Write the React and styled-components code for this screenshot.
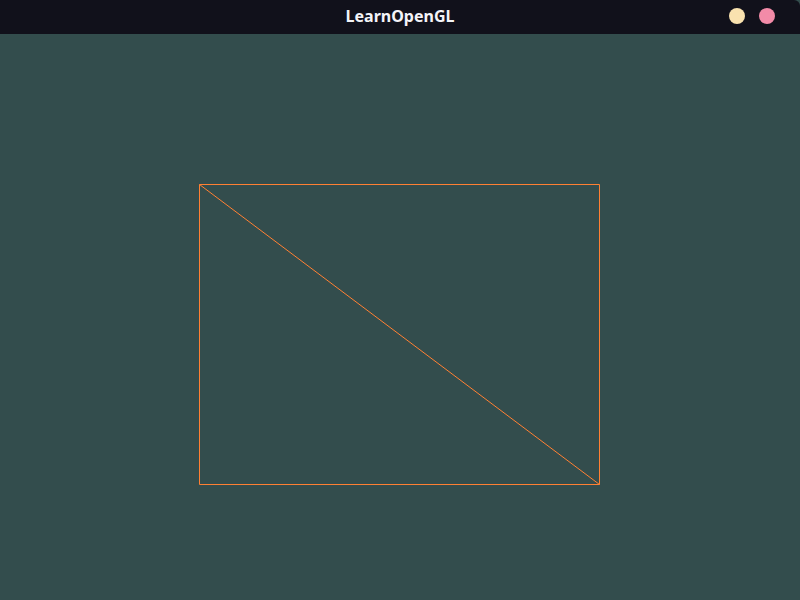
import React from "react";
import styled, { createGlobalStyle } from "styled-components";

const GlobalStyle = createGlobalStyle`
  html, body {
    margin: 0;
    padding: 0;
    width: 800px;
    height: 600px;
    overflow: hidden;
    background: #334d4d;
  }
`;

const Window = styled.div`
  width: 800px;
  height: 600px;
  display: flex;
  flex-direction: column;
  background: #334d4d;
  border-top-right-radius: 6px;
  overflow: hidden;
`;

const TitleBar = styled.div`
  height: 34px;
  flex-shrink: 0;
  background: #11111b;
  display: grid;
  grid-template-columns: 1fr auto 1fr;
  align-items: center;
  font-family: "Noto Sans", "Open Sans", sans-serif;
`;

const Title = styled.div`
  grid-column: 2;
  color: #f4f4f8;
  font-size: 16px;
  font-weight: 700;
  padding-bottom: 3px;
`;

const Controls = styled.div`
  grid-column: 3;
  display: flex;
  justify-content: flex-end;
  gap: 14px;
  padding-right: 25px;
  padding-bottom: 2px;
`;

const Dot = styled.span`
  width: 16px;
  height: 16px;
  border-radius: 50%;
  background: ${(p) => p.color};
`;

const Viewport = styled.div`
  flex: 1;
  display: flex;
  justify-content: center;
  padding-top: 150px;
  padding-right: 1px;
`;

export default function App() {
  return (
    <>
      <GlobalStyle />
      <Window>
        <TitleBar>
          <Title>LearnOpenGL</Title>
          <Controls>
            <Dot color="#f9e2af" />
            <Dot color="#f38ba8" />
          </Controls>
        </TitleBar>
        <Viewport>
          {/* wireframe quad: two triangles */}
          <svg width="401" height="301" viewBox="0 0 401 301">
            <g stroke="#ff8033" strokeWidth="1" fill="none">
              <path d="M0.5 0.5 H400.5 V300.5 H0.5 Z" />
              <line x1="0.5" y1="0.5" x2="400.5" y2="300.5" />
            </g>
          </svg>
        </Viewport>
      </Window>
    </>
  );
}
